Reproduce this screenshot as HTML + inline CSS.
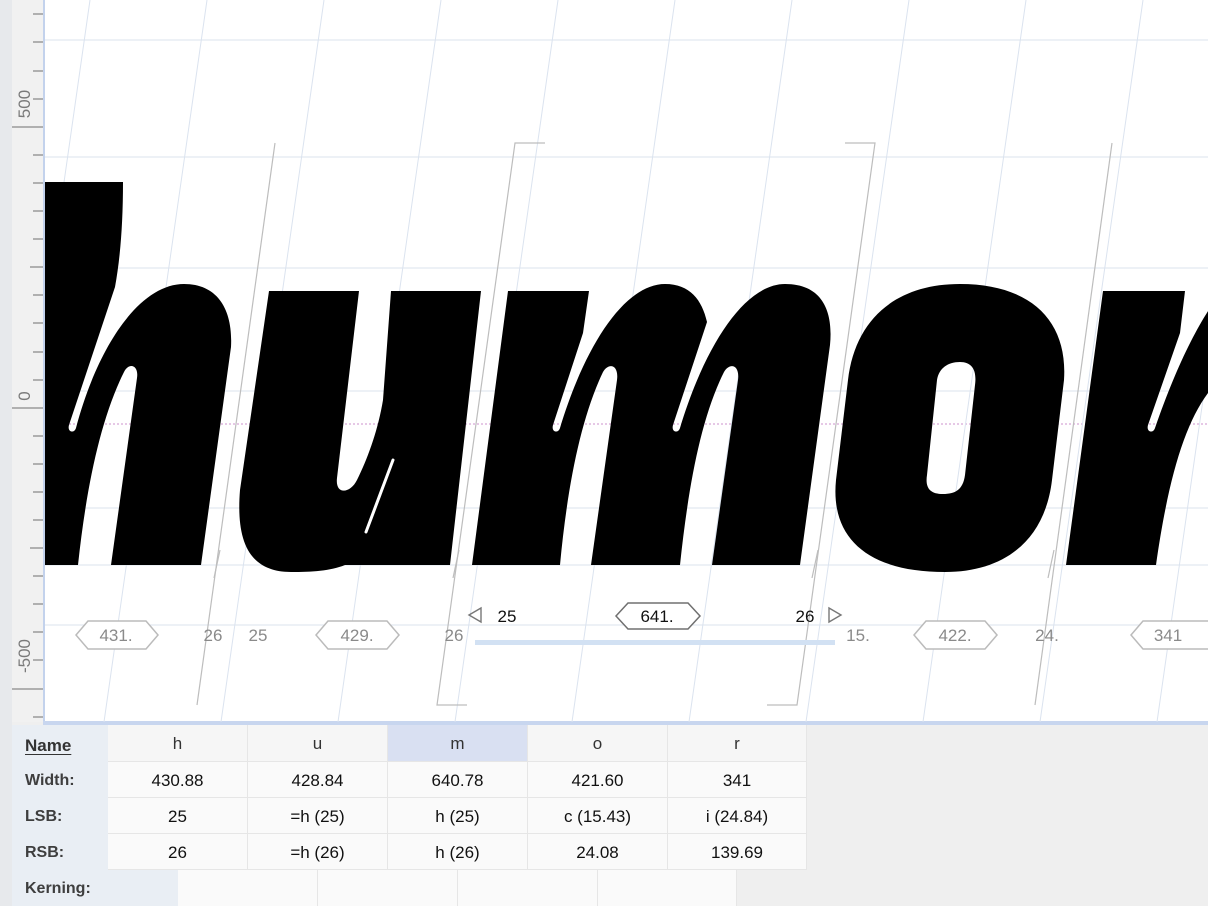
<!DOCTYPE html>
<html><head><meta charset="utf-8"><style>
body{margin:0;width:1208px;height:906px;overflow:hidden;background:#efefef;font-family:"Liberation Sans",sans-serif;position:relative}
.abs{position:absolute}
.cell{position:absolute;box-sizing:border-box;text-align:center;font-size:17px;color:#111;border-right:1px solid #e6e6e6;border-bottom:1px solid #e6e6e6;background:#fafafa;line-height:38px}
.lab{position:absolute;left:25px;font-weight:bold;font-size:16px;color:#3e3e3e}
</style></head><body>
<div class="abs" style="left:0;top:0;width:12px;height:906px;background:#e7e9ec"></div>
<div class="abs" style="left:12px;top:0;width:31px;height:722px;background:#f1f1f1"></div>
<svg class="abs" style="left:0;top:0" width="1208" height="906">
  <g stroke="#9a9a9a" stroke-width="1.5">
    <line x1="33" y1="14" x2="43" y2="14"/><line x1="33" y1="42" x2="43" y2="42"/><line x1="33" y1="71" x2="43" y2="71"/><line x1="33" y1="99" x2="43" y2="99"/>
    <line x1="12" y1="127" x2="43" y2="127"/><line x1="33" y1="155" x2="43" y2="155"/><line x1="33" y1="183" x2="43" y2="183"/><line x1="33" y1="211" x2="43" y2="211"/>
    <line x1="33" y1="239" x2="43" y2="239"/><line x1="30" y1="267" x2="43" y2="267"/><line x1="33" y1="295" x2="43" y2="295"/><line x1="33" y1="323" x2="43" y2="323"/>
    <line x1="33" y1="352" x2="43" y2="352"/><line x1="33" y1="380" x2="43" y2="380"/><line x1="12" y1="408" x2="43" y2="408"/><line x1="33" y1="436" x2="43" y2="436"/>
    <line x1="33" y1="464" x2="43" y2="464"/><line x1="33" y1="492" x2="43" y2="492"/><line x1="33" y1="520" x2="43" y2="520"/><line x1="30" y1="548" x2="43" y2="548"/>
    <line x1="33" y1="576" x2="43" y2="576"/><line x1="33" y1="604" x2="43" y2="604"/><line x1="33" y1="632" x2="43" y2="632"/><line x1="33" y1="660" x2="43" y2="660"/>
    <line x1="12" y1="689" x2="43" y2="689"/><line x1="33" y1="717" x2="43" y2="717"/>
  </g>
  <g fill="#7a7a7a" font-family="Liberation Sans, sans-serif" font-size="17">
    <text transform="translate(30,104) rotate(-90)" text-anchor="middle">500</text>
    <text transform="translate(30,396) rotate(-90)" text-anchor="middle">0</text>
    <text transform="translate(30,656) rotate(-90)" text-anchor="middle">-500</text>
  </g>
  <rect x="43" y="0" width="2.5" height="724" fill="#c3d2ec"/>
  <rect x="45" y="0" width="1163" height="722" fill="#fff"/>
  <rect x="43" y="721" width="1165" height="4" fill="#c8d6ef"/>
  <svg x="45" y="0" width="1163" height="722" viewBox="45 0 1163 722">
    <g stroke="#dbe3ee" stroke-width="1">
      <line x1="45" y1="40" x2="1208" y2="40"/><line x1="45" y1="157" x2="1208" y2="157"/><line x1="45" y1="268" x2="1208" y2="268"/>
      <line x1="45" y1="391" x2="1208" y2="391"/><line x1="45" y1="508" x2="1208" y2="508"/><line x1="45" y1="565" x2="1208" y2="565"/><line x1="45" y1="625" x2="1208" y2="625"/>
    </g>
    <line x1="45" y1="424" x2="1208" y2="424" stroke="#d8a8d8" stroke-width="1.3" stroke-dasharray="2,2"/>
    <g stroke="#dbe3ef" stroke-width="1">
      <line x1="90" y1="0" x2="-13" y2="722"/><line x1="207" y1="0" x2="104" y2="722"/><line x1="324" y1="0" x2="221" y2="722"/>
      <line x1="441" y1="0" x2="338" y2="722"/><line x1="558" y1="0" x2="455" y2="722"/><line x1="675" y1="0" x2="572" y2="722"/>
      <line x1="792" y1="0" x2="689" y2="722"/><line x1="909" y1="0" x2="806" y2="722"/><line x1="1026" y1="0" x2="923" y2="722"/>
      <line x1="1143" y1="0" x2="1040" y2="722"/><line x1="1260" y1="0" x2="1157" y2="722"/>
    </g>
    <g stroke="#bdbdbd" stroke-width="1.2" fill="none">
      <line x1="275" y1="143" x2="197" y2="705"/>
      <polyline points="545,143 515,143 437,705 467,705"/>
      <polyline points="845,143 875,143 797,705 767,705"/>
      <line x1="1112" y1="143" x2="1035" y2="705"/>
      <line x1="220" y1="550" x2="214" y2="578"/><line x1="459" y1="550" x2="453" y2="578"/><line x1="818" y1="550" x2="812" y2="578"/><line x1="1054" y1="550" x2="1048" y2="578"/>
    </g>
    <g fill="#000">
      <path d="M40,182 L123,182 C123,225 120,260 115,287 L69,425 C67,432 74,434 76,428 C98,345 140,284 184,284 C218,284 233,310 231,347 L201,565 L111,565 L137,378 C139,365 129,362 124,372 C100,420 86,490 78,565 L40,565 Z"/>
      <path d="M269,291 L359,291 L337,478 C335,495 350,494 357,480 C368,458 378,430 383,400 L391,291 L481,291 L450,565 L345,565 C330,571 312,572 291,572 C248,572 236,540 240,490 Z"/>
      <path d="M508,291 L589,291 L583,333 L553,425 C551,432 558,434 560,428 C585,345 625,284 665,284 C690,284 702,300 707,322 L673,425 C671,432 678,434 680,428 C705,345 745,284 785,284 C825,284 833,315 830,345 L800,565 L712,565 L738,380 C740,365 730,362 724,372 C700,420 688,490 680,565 L591,565 L617,380 C619,365 609,362 603,372 C580,420 567,490 560,565 L472,565 Z"/>
      <path fill-rule="evenodd" d="M960,284 C1030,284 1068,320 1064,380 L1052,480 C1045,540 1005,572 945,572 C870,572 830,540 836,480 L848,380 C855,320 895,284 960,284 Z M960,362 C972,362 977,370 975,385 L965,475 C963,490 955,494 943,494 C930,494 925,488 927,475 L937,380 C939,368 948,362 960,362 Z"/>
      <path d="M1103,291 L1185,291 L1180,333 L1148,425 C1146,432 1153,434 1155,428 C1175,370 1195,330 1212,305 L1212,388 C1185,420 1168,480 1156,565 L1066,565 Z"/>
    </g>
    <g stroke="#fff" stroke-width="3" stroke-linecap="round">
      <line x1="393" y1="460" x2="366" y2="532"/>
    </g>
    <g font-family="Liberation Sans, sans-serif" font-size="17" text-anchor="middle">
      <g fill="#fff" stroke="#bbb" stroke-width="1.5">
        <polygon points="88,621 146,621 158,635 146,649 88,649 76,635"/>
        <polygon points="328,621 387,621 399,635 387,649 328,649 316,635"/>
        <polygon points="926,621 985,621 997,635 985,649 926,649 914,635"/>
        <polygon points="1143,621 1212,621 1220,635 1212,649 1143,649 1131,635"/>
      </g>
      <polygon points="628,603 688,603 700,616 688,629 628,629 616,616" fill="#fff" stroke="#707070" stroke-width="1.5"/>
      <g fill="#8a8a8a">
        <text x="116" y="641">431.</text><text x="213" y="641">26</text><text x="258" y="641">25</text>
        <text x="357" y="641">429.</text><text x="454" y="641">26</text><text x="858" y="641">15.</text>
        <text x="955" y="641">422.</text><text x="1047" y="641">24.</text><text x="1168" y="641">341</text>
      </g>
      <g fill="#111"><text x="507" y="622">25</text><text x="657" y="622">641.</text><text x="805" y="622">26</text></g>
      <polygon points="469,615 481,608 481,622" fill="none" stroke="#777" stroke-width="1.4"/>
      <polygon points="841,615 829,608 829,622" fill="none" stroke="#777" stroke-width="1.4"/>
    </g>
    <rect x="475" y="640" width="360" height="5" fill="#d2e1f3"/>
  </svg>
</svg>
<div class="abs" style="left:12px;top:725px;width:96px;height:181px;background:#e9eef4"></div>
<div class="abs" style="left:108px;top:870px;width:70px;height:36px;background:#e9eef4"></div>
<div class="lab" style="top:736px;font-size:17px;color:#333;text-decoration:underline;text-underline-offset:3px">Name</div>
<div class="lab" style="top:772px">Width:</div>
<div class="lab" style="top:808px">LSB:</div>
<div class="lab" style="top:844px">RSB:</div>
<div class="lab" style="top:880px">Kerning:</div>
<div class="cell" style="left:108px;top:725px;width:140px;height:37px;background:#f6f6f6;color:#333">h</div>
<div class="cell" style="left:248px;top:725px;width:140px;height:37px;background:#f6f6f6;color:#333">u</div>
<div class="cell" style="left:388px;top:725px;width:140px;height:37px;background:#d9e0f2;color:#333">m</div>
<div class="cell" style="left:528px;top:725px;width:140px;height:37px;background:#f6f6f6;color:#333">o</div>
<div class="cell" style="left:668px;top:725px;width:139px;height:37px;background:#f6f6f6;color:#333">r</div>
<div class="cell" style="left:108px;top:762px;width:140px;height:36px">430.88</div>
<div class="cell" style="left:248px;top:762px;width:140px;height:36px">428.84</div>
<div class="cell" style="left:388px;top:762px;width:140px;height:36px">640.78</div>
<div class="cell" style="left:528px;top:762px;width:140px;height:36px">421.60</div>
<div class="cell" style="left:668px;top:762px;width:139px;height:36px">341</div>
<div class="cell" style="left:108px;top:798px;width:140px;height:36px">25</div>
<div class="cell" style="left:248px;top:798px;width:140px;height:36px">=h (25)</div>
<div class="cell" style="left:388px;top:798px;width:140px;height:36px">h (25)</div>
<div class="cell" style="left:528px;top:798px;width:140px;height:36px">c (15.43)</div>
<div class="cell" style="left:668px;top:798px;width:139px;height:36px">i (24.84)</div>
<div class="cell" style="left:108px;top:834px;width:140px;height:36px">26</div>
<div class="cell" style="left:248px;top:834px;width:140px;height:36px">=h (26)</div>
<div class="cell" style="left:388px;top:834px;width:140px;height:36px">h (26)</div>
<div class="cell" style="left:528px;top:834px;width:140px;height:36px">24.08</div>
<div class="cell" style="left:668px;top:834px;width:139px;height:36px">139.69</div>
<div class="cell" style="left:178px;top:870px;width:140px;height:36px;border-bottom:none"></div>
<div class="cell" style="left:318px;top:870px;width:140px;height:36px;border-bottom:none"></div>
<div class="cell" style="left:458px;top:870px;width:140px;height:36px;border-bottom:none"></div>
<div class="cell" style="left:598px;top:870px;width:139px;height:36px;border-bottom:none"></div>
</body></html>
